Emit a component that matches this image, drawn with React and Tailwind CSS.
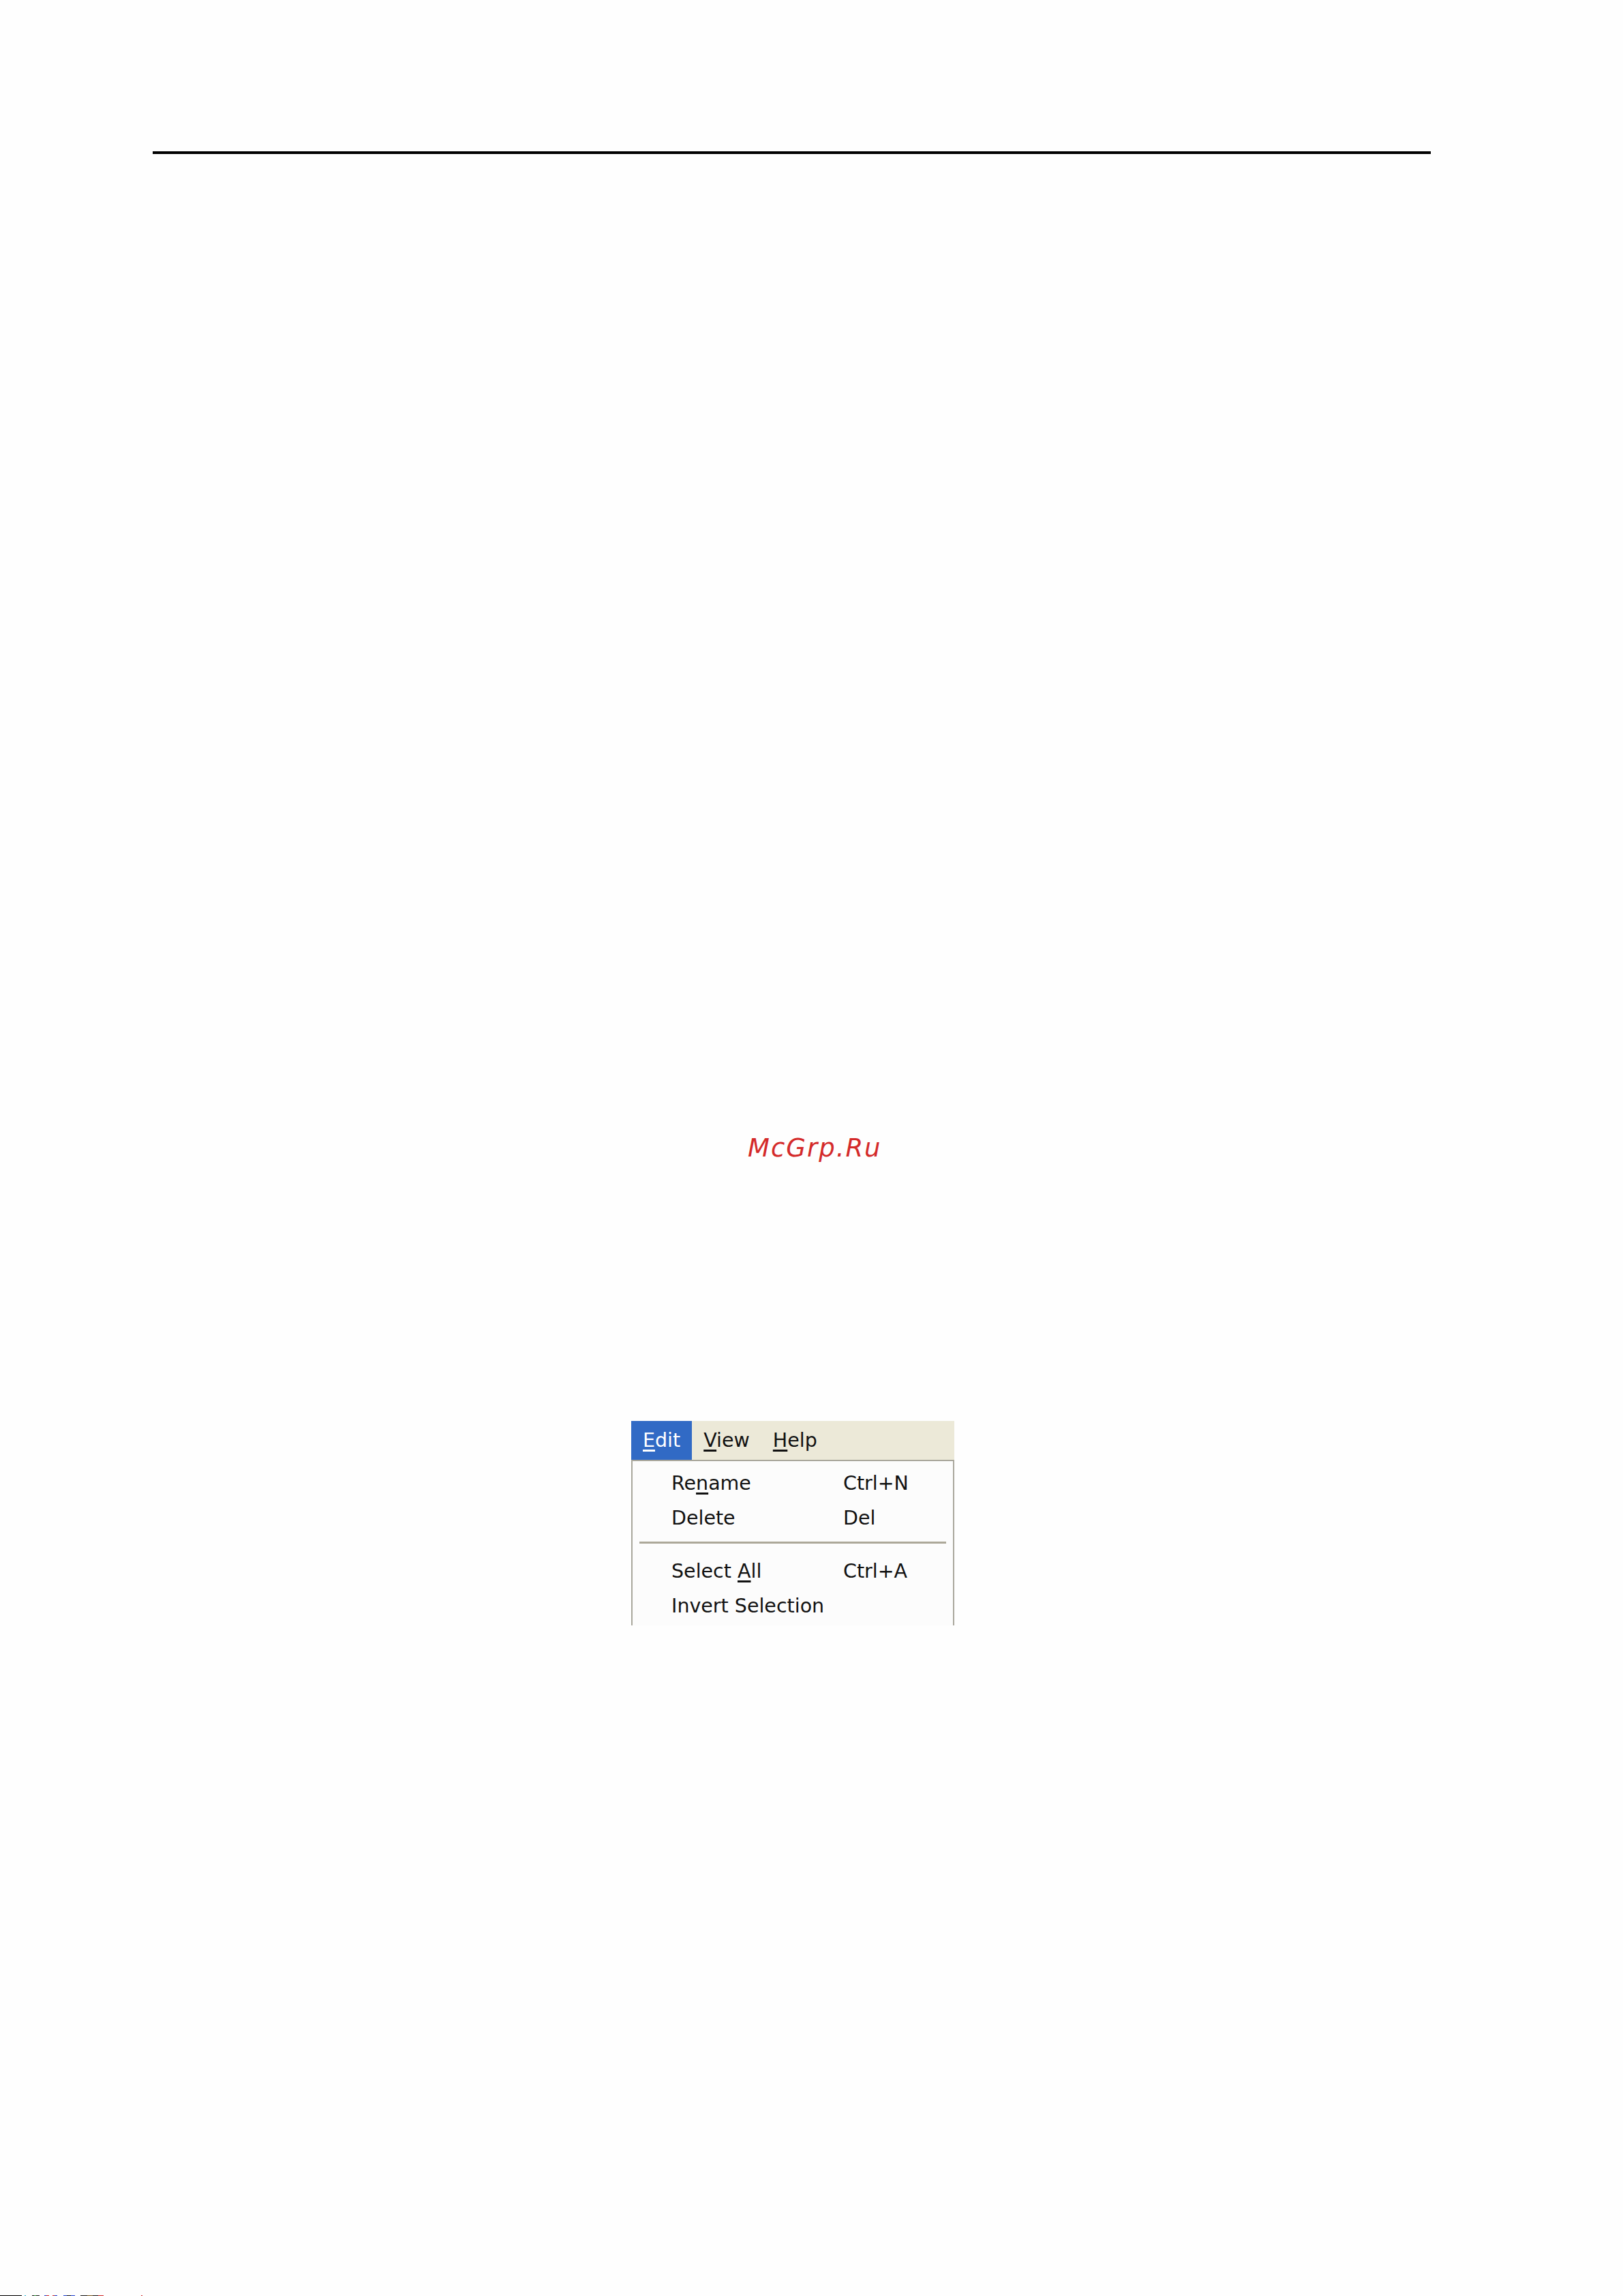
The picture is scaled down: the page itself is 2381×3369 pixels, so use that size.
const menuFont = { fontFamily: '"DejaVu Sans", Verdana, sans-serif' }

function MenuItem({ label, shortcut }) {
    return (
        <div className="grid grid-cols-[252px_1fr] h-[51px] leading-[51px] pl-[57px]">
            <span>{label}</span>
            <span>{shortcut}</span>
        </div>
    )
}

// the strip of stray pixels along the bottom edge of the scan
const specks = [
    ['w-[32px]', 'bg-black'],
    ['w-[4px]', 'bg-transparent'],
    ['w-[2px]', 'bg-[#22b5d6]'],
    ['w-[9px]', 'bg-transparent'],
    ['w-[3px]', 'bg-[#1a1a1a]'],
    ['w-[3px]', 'bg-[#2f9a3a]'],
    ['w-[5px]', 'bg-[#222]'],
    ['w-[7px]', 'bg-transparent'],
    ['w-[3px]', 'bg-[#2040d0]'],
    ['w-[4px]', 'bg-[#d02a2a]'],
    ['w-[5px]', 'bg-transparent'],
    ['w-[3px]', 'bg-[#d02a2a]'],
    ['w-[4px]', 'bg-[#2040d0]'],
    ['w-[9px]', 'bg-transparent'],
    ['w-[5px]', 'bg-[#2040d0]'],
    ['w-[6px]', 'bg-[#1a1a1a]'],
    ['w-[6px]', 'bg-[#2040d0]'],
    ['w-[8px]', 'bg-transparent'],
    ['w-[10px]', 'bg-[#1a1a1a]'],
    ['w-[8px]', 'bg-[#7a5a20]'],
    ['w-[8px]', 'bg-[#1a1a1a]'],
    ['w-[8px]', 'bg-[#d02a2a]'],
    ['w-[55px]', 'bg-transparent'],
    ['w-[2px]', 'bg-[#d02a2a]'],
]

export default function App() {
    return (
        <div className="w-[2381px] h-[3369px] bg-[#fefefe] flex flex-col overflow-hidden">
            {/* header rule */}
            <div className="ml-[224px] mt-[222px] w-[1875px] h-[4px] bg-black" />

            {/* watermark */}
            <p
                className="ml-[1097px] mt-[1437px] h-[44px] leading-[44px] text-[37px] italic tracking-[2px] text-[#d42a2a]"
                style={menuFont}
            >
                McGrp.Ru
            </p>

            {/* menu screenshot */}
            <div className="ml-[926px] mt-[378px] w-[474px] text-[28.5px] text-[#111]" style={menuFont}>
                <div className="flex h-[57px] leading-[57px] bg-[#ece9d8]">
                    <span className="px-[17px] bg-[#316ac5] text-white">
                        <u className="decoration-[3px] underline-offset-[4px]">E</u>dit
                    </span>
                    <span className="px-[17px]">
                        <u className="decoration-[3px] underline-offset-[4px]">V</u>iew
                    </span>
                    <span className="px-[17px]">
                        <u className="decoration-[3px] underline-offset-[4px]">H</u>elp
                    </span>
                </div>
                <div className="h-[243px] bg-[#fcfcfc] border-l-[2px] border-r-[2px] border-t-[2px] border-[#a9a79c] pt-[7px]">
                    <MenuItem
                        label={<>Re<u className="decoration-[3px] underline-offset-[4px]">n</u>ame</>}
                        shortcut="Ctrl+N"
                    />
                    <MenuItem label="Delete" shortcut="Del" />
                    <div className="mx-[10px] mt-[9px] mb-[15px] h-[3px] bg-[#aca899]" />
                    <MenuItem
                        label={<>Select <u className="decoration-[3px] underline-offset-[4px]">A</u>ll</>}
                        shortcut="Ctrl+A"
                    />
                    <MenuItem label="Invert Selection" />
                </div>
            </div>

            <div className="flex-1" />
            <div className="flex h-[1px]">
                {specks.map(([w, bg], i) => (
                    <div key={i} className={`${w} ${bg}`} />
                ))}
            </div>
        </div>
    )
}
